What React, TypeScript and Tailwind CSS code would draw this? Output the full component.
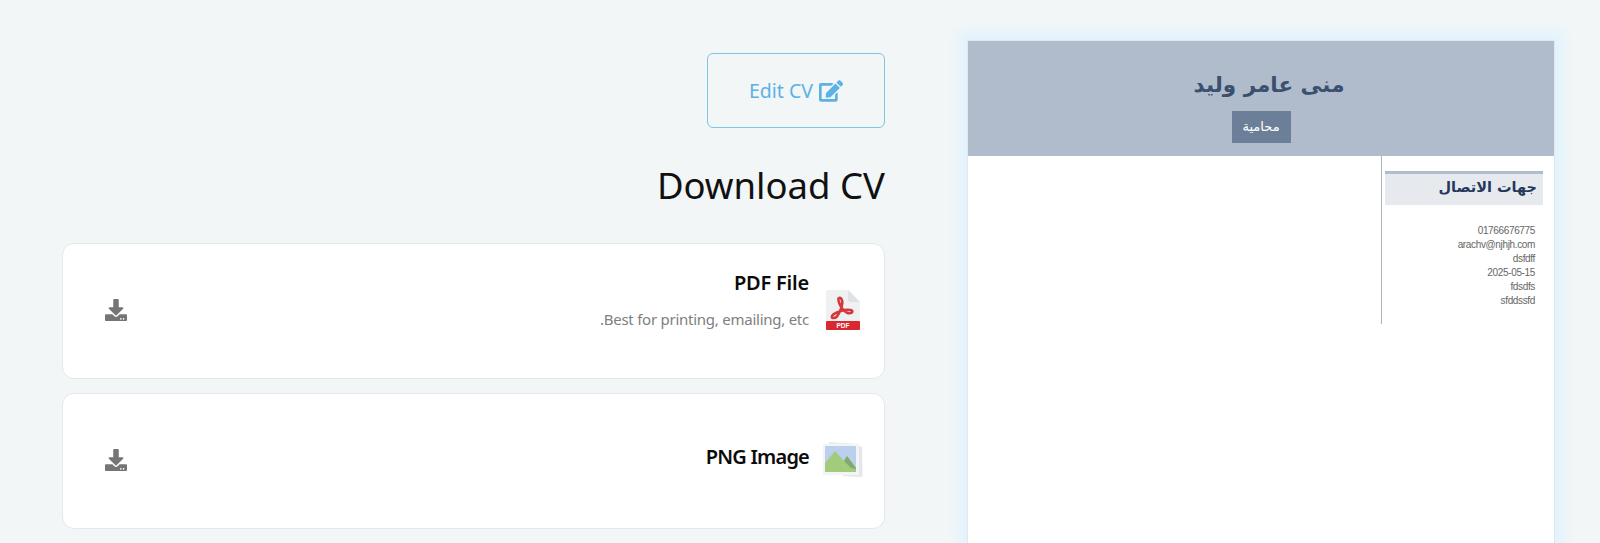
import { FaDownload, FaEdit } from "react-icons/fa";

function PdfIcon() {
  return (
    <svg width="36" height="42" viewBox="0 0 36 42">
      <path d="M1 3a2 2 0 0 1 2-2h20l12 12v27a1 1 0 0 1-1 1H2a1 1 0 0 1-1-1z" fill="#eef0f2" />
      <path d="M23 1v10a2 2 0 0 0 2 2h10z" fill="#dfe2e5" />
      <path
        d="M13 8c2.500-.6 3.400 2.500 3.300 5-.1 3.600-3 10.500-5.300 13.300-1.500 1.800-4.800 2.500-5.200.6-.3-2 4.400-4.600 9-6 3.800-1.100 10.700-2 11.500.3.600 2-3.100 2.600-5.500 1.300-3.300-1.800-6.500-6.300-7.700-10-.7-2-1.400-3.900-.1-4.500"
        fill="none"
        stroke="#d6373b"
        strokeWidth="2.600"
        transform="translate(1 1)"
      />
      <rect x="1" y="32" width="34" height="9" rx="1" fill="#d9282f" />
      <text x="18" y="39" fontSize="6.500" fontWeight="700" fill="#fff" textAnchor="middle" fontFamily="'Liberation Sans', sans-serif">
        PDF
      </text>
    </svg>
  );
}

function ImageIcon() {
  return (
    <svg width="40" height="36" viewBox="0 0 40 36">
      <path d="M6 0l30 2v28L4 30z" fill="#e9edf0" />
      <path d="M36 4l3 1 .500 30-20-1z" fill="#e3e7eb" />
      <rect x="0" y="2" width="36" height="31" fill="#f3f5f4" />
      <rect x="2" y="4" width="31" height="26" fill="#bcd0ee" />
      <path d="M2 30v-9L12 9l9 10 3-5 9 12v4z" fill="#a3cb7c" />
      <path d="M21 19l3-5 9 12v1l-5-1z" fill="#84a870" />
    </svg>
  );
}

function FileCard({ title, desc, icon }: { title: string; desc?: string; icon: React.ReactNode }) {
  return (
    <div className="flex h-[136px] items-center justify-between rounded-xl border border-[#e3e8ea] bg-white pr-[21px] pl-[42px]">
      <div className="flex items-center gap-[14px]">
        <div className="mb-[2px] flex w-10 shrink-0 justify-center">{icon}</div>
        <div className={desc ? "pb-[22px] text-right" : "pb-2 text-right"}>
          <h3 className={desc ? "text-[20px] leading-[28px] font-semibold tracking-[-0.2px] text-[#0b0b0b]" : "text-[20px] leading-[28px] font-semibold tracking-[-0.8px] text-[#0b0b0b]"}>
            {title}
          </h3>
          {desc && <p className="mt-[10px] text-[15px] leading-6 tracking-[-0.25px] text-[#808080]">{desc}</p>}
        </div>
      </div>
      <FaDownload className="mb-[2px] text-[22px] text-[#757575]" />
    </div>
  );
}

export default function App() {
  return (
    <div
      dir="rtl"
      className="flex h-[543px] gap-[82px] overflow-hidden bg-[#f2f6f7] pt-10 pr-[45px] pl-[62px] font-['Noto_Sans',sans-serif]"
    >
      <div className="h-[700px] w-[588px] shrink-0 border border-[#e4e7ea] bg-white font-['DejaVu_Sans',sans-serif] shadow-[0_0_12px_8px_#e0f3ff]">
        <header className="flex h-[115px] flex-col items-center bg-[#b0bccb] pt-[27px]">
          <h1 className="pl-4 text-[21.500px] leading-[34px] font-bold text-[#3a506f]">منى عامر وليد</h1>
          <span className="mt-[9px] flex h-8 w-[59px] items-center justify-center bg-[#6b7f99] text-[13px] text-white">
            محامية
          </span>
        </header>
        <aside className="h-[168px] w-[173px] border-l border-[#aab4c0] pt-[15px] pr-[11px] pl-[3px]">
          <h2 className="h-[34px] border-t-[3px] border-[#b0bccb] bg-[#e6eaee] pr-[6px] text-[14.500px] leading-[26px] font-bold text-[#26385a]">
            جهات الاتصال
          </h2>
          <ul dir="ltr" className="mt-[19px] pr-[8px] text-right font-['Liberation_Sans',sans-serif] text-[10px] leading-[14px] tracking-[-0.35px] text-[#666]">
            <li>01766676775</li>
            <li>arachv@njhjh.com</li>
            <li>dsfdff</li>
            <li>2025-05-15</li>
            <li>fdsdfs</li>
            <li>sfddssfd</li>
          </ul>
        </aside>
      </div>

      <main className="min-w-0 flex-1 pt-[13px]">
        <button className="flex h-[75px] w-[178px] items-center justify-center gap-[6px] rounded-md border border-[#7cc6e2] text-[19.500px] text-[#5cb2e4]">
          <FaEdit className="text-[24px]" />
          <span dir="ltr">Edit CV</span>
        </button>
        <h2 dir="ltr" className="mt-[27px] text-right text-[36.500px] leading-[60px] text-[#111]">
          Download CV
        </h2>
        <div className="mt-[28px] flex flex-col gap-[14px]">
          <FileCard title="PDF File" desc="Best for printing, emailing, etc." icon={<PdfIcon />} />
          <FileCard title="PNG Image" icon={<ImageIcon />} />
        </div>
      </main>
    </div>
  );
}
